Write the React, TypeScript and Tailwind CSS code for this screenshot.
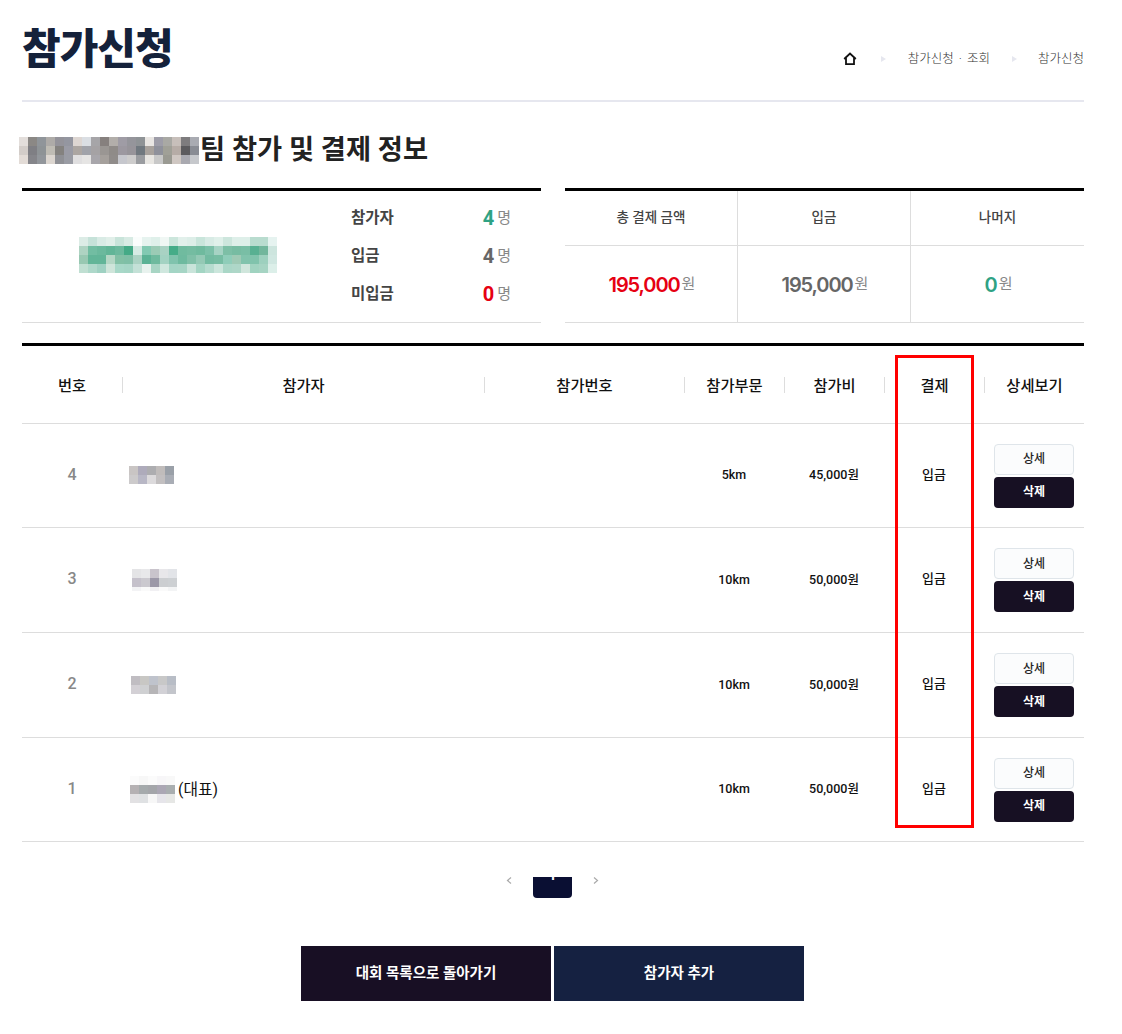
const headingMosaic = [
  ["e3dedb","8b8885","90959a","aeaba8","94939a","9496a0","ddd6d2","dadee3","a6a5a8","86807e","b2aeaa","9f9ca5","95959b","8f9396","e9e6e3","9e9da8","a9a9a4","c7bfba","7e7c7e","a9abb2"],
  ["d3cdc9","7f7f84","8e9396","bfbcb4","84827f","9a9ba5","aca6a2","a1a3aa","a5a2a4","9a9693","8f8b88","9c98a0","97949a","70787f","a8a29d","8f919b","a0a097","b6aca6","5c5b5e","898c94"],
  ["e3dcd7","85858a","92969b","dcd6d0","8f9095","9a9ca4","e0dfe0","e6e5e4","a8a6ab","a5a09c","908c8a","c6c7cd","cdcccc","9a9ca0","e8e6e2","c8c8c8","9a9a92","cfc7c2","a9a9b0","c6c8cc"],
]

const teamMosaic = [
  ["dcece6","c6e2d9","d9ebe5","e1efe9","c9e4da","d8ebe4","fafdfc","e6f3ef","dff0ea","f0f7f4","cce6dc","e2f0eb","ddeee8","c9e5db","d8ebe5","e0f0ea","cde6dd","deefe9","deefe9","b9dccf","b9dccf","e6f3f0"],
  ["aed3c2","72bda2","6bb99d","62b597","6cb99d","44aa86","d6ebe4","82c9b2","9bcbb5","a9d2c3","45ac88","70bb9f","74bca1","6fba9e","7bc0a8","a6d3c4","7dbfa6","77bca2","79bea5","58b092","72b69c","cde5de"],
  ["98c8b2","62b598","62b598","b5d7c5","82c0a5","7fbfa6","acd3c4","5bb295","6fba9e","a3d2c2","80c3ad","6eba9f","80c0a8","94c9b5","72bba1","76bda3","8fcdb9","9fcab5","81c3ac","80c3ac","9dd0be","d0e7e1"],
  ["c0dfd2","aed8ca","9fd1c2","cfe5da","a8d8c8","a6d6c6","c4e1d7","e8f2ee","a8d5c4","cfe7de","a4d5c5","a6d5c5","c9e4da","a3d5c3","b6dccf","cbe6dc","aad7c7","aed7c8","d0e6dc","a0d3c0","a6d4c3","dcefe9"],
]

const nameMosaics = [
  [["c9c5c4","aeabbb","adadb0","c0bcbb","9aa0a8"],["cccacb","b8b7c5","dcdadc","c2bfc0","a9adb5"]],
  [["e4e4e6","e8e8ea","c9c4cc","e8e7ea","e2e4e8"],["c5c1cb","cbc9cf","9c98a8","ccced1","cdd0d3"],["f3f3f5","fafafa","f1f0f3","fafafa","f3f4f5"]],
  [["c0bdc2","c8c7c4","bfc3cc","c8c8c8","b8bdc6"],["d3d0d5","cfd0d2","b6b5b7","d2d1d6","c3c5cb"]],
  [["fbfbfb","f7f7f7","fbfbfb","f7f6f8","f8f8f8"],["b5b1b3","a5aaac","a4a6aa","aba7b4","a9aeb0"],["e2e1e3","dfe1e3","f7f7f7","e6e5ea","e6e7e5"]],
]

const columns = ["번호", "참가자", "참가번호", "참가부문", "참가비", "결제", "상세보기"]

const rows = [
  { no: 4, mosaic: 0, height: "h-[104px]", shift: "ml-[7px] mb-[1px]", part: "5km", fee: "45,000원" },
  { no: 3, mosaic: 1, height: "h-[105px]", shift: "ml-[10px] h-[22px] overflow-hidden", part: "10km", fee: "50,000원" },
  { no: 2, mosaic: 2, height: "h-[105px]", shift: "ml-[9px] mb-[1px]", part: "10km", fee: "50,000원" },
  { no: 1, mosaic: 3, height: "h-[104px]", shift: "ml-[8px]", part: "10km", fee: "50,000원", leader: true },
]

function Mosaic({ cells }: { cells: string[][] }) {
  return (
    <div className="flex flex-col shrink-0">
      {cells.map((line, y) => (
        <div key={y} className="flex">
          {line.map((c, x) => (
            <div key={x} className="w-[9px] h-[9px]" style={{ backgroundColor: `#${c}` }} />
          ))}
        </div>
      ))}
    </div>
  )
}

function Count({ label, value, color }: { label: string; value: number; color: string }) {
  return (
    <div className="flex items-center justify-between h-[38px]">
      <span className="pt-[2px] text-[15.5px] font-bold text-[#444]">{label}</span>
      <span className="flex items-center gap-[3px]">
        <span className={`text-[20px] font-bold ${color}`}>{value}</span>
        <span className="text-[15px] text-[#888]">명</span>
      </span>
    </div>
  )
}

function Amount({ value, color }: { value: string; color: string }) {
  return (
    <div className="flex items-center justify-center gap-[2px] h-[77px] pl-[2px] font-['Inter','Noto_Sans_CJK_KR',sans-serif]">
      <span className={`text-[20px] font-semibold tracking-[-1.1px] ${color}`}>{value}</span>
      <span className="text-[15px] text-[#888]">원</span>
    </div>
  )
}

export default function App() {
  return (
    <main className="relative w-[1122px] h-[1034px] bg-white overflow-hidden font-['Roboto','Noto_Sans_CJK_KR',sans-serif] text-black">
      <div className="ml-[22px] w-[1062px]">
        {/* page title + breadcrumb */}
        <div className="flex items-start justify-between h-[102px] border-b-2 border-[#e6e7ef]">
          <h1 className="mt-[21px] text-[42px] leading-[58px] font-black tracking-[-1px] text-[#14213a]">참가신청</h1>
          <div className="flex items-center mt-[50px] text-[12.5px] leading-[18px] font-light text-[#333]">
            <svg width="14" height="14" viewBox="0 0 14 14" fill="none" stroke="#111" strokeWidth="1.8">
              <path d="M1.2 7 7 1.6 12.8 7M3 6v6.2h8V6" />
            </svg>
            <svg className="ml-[24px] mr-[22px]" width="5" height="6" viewBox="0 0 5 6" fill="#e6e7ef">
              <path d="M0 0 5 3 0 6z" />
            </svg>
            <span className="whitespace-pre [word-spacing:2px]">참가신청 · 조회</span>
            <svg className="ml-[22px] mr-[21px]" width="5" height="6" viewBox="0 0 5 6" fill="#e6e7ef">
              <path d="M0 0 5 3 0 6z" />
            </svg>
            <span>참가신청</span>
          </div>
        </div>

        {/* team heading */}
        <div className="flex items-center -ml-[3px] mt-[30px] h-[36px]">
          <Mosaic cells={headingMosaic} />
          <h2 className="ml-[1px] text-[27.3px] leading-[36px] font-bold text-[#222]">팀 참가 및 결제 정보</h2>
        </div>

        {/* summary */}
        <div className="flex justify-between mt-[20px]">
          <div className="flex w-[519px] h-[135px] border-t-[3px] border-black border-b border-b-[#ddd]">
            <div className="flex items-center w-[329px] pl-[57px] pb-[4px]">
              <Mosaic cells={teamMosaic} />
            </div>
            <div className="w-[160px] pt-[8px]">
              <Count label="참가자" value={4} color="text-[#2fa284]" />
              <Count label="입금" value={4} color="text-[#666]" />
              <Count label="미입금" value={0} color="text-[#e60012]" />
            </div>
          </div>
          <div className="grid grid-cols-3 w-[519px] h-[135px] border-t-[3px] border-black border-b border-b-[#ddd]">
            {[
              ["총 결제 금액", "195,000", "text-[#e60012]"],
              ["입금", "195,000", "text-[#666]"],
              ["나머지", "0", "text-[#2fa284]"],
            ].map(([label, value, color], i) => (
              <div key={label} className={i < 2 ? "border-r border-[#ddd]" : ""}>
                <div className="flex items-center justify-center h-[55px] pb-[2px] border-b border-[#ddd] text-[13.5px] font-medium text-[#444]">
                  {label}
                </div>
                <Amount value={value} color={color} />
              </div>
            ))}
          </div>
        </div>

        {/* participants */}
        <div className="mt-[20px] border-t-[3px] border-black">
          <div className="grid grid-cols-[100px_362px_200px_100px_100px_100px_100px] h-[78px] border-b border-[#ddd] items-center">
            {columns.map((c, i) => (
              <div
                key={c}
                className={`flex items-center justify-center h-[16px] pt-[3px] text-[15.3px] font-medium text-[#111] ${i > 0 ? "border-l border-[#ddd]" : ""}`}
              >
                {c}
              </div>
            ))}
          </div>
          {rows.map((r) => (
            <div
              key={r.no}
              className={`grid grid-cols-[100px_362px_200px_100px_100px_100px_100px] ${r.height} border-b border-[#ddd] items-center text-[#111]`}
            >
              <div className="mb-[2px] text-center text-[16px] font-medium text-[#888]">{r.no}</div>
              <div className="flex items-center">
                <div className={r.shift}>
                  <Mosaic cells={nameMosaics[r.mosaic]} />
                </div>
                {r.leader && <span className="ml-[3px] text-[15.8px] text-[#111]">(대표)</span>}
              </div>
              <div />
              <div className="text-center text-[12.5px] font-medium">{r.part}</div>
              <div className="text-center text-[12.5px] font-medium">{r.fee}</div>
              <div className="mb-[2px] text-center text-[13px] font-medium">입금</div>
              <div className="flex flex-col items-center gap-[2px]">
                <button className="w-[80px] h-[31px] rounded-[4px] border border-[#dfe5ea] bg-[#fbfcfd] text-[12px] font-medium text-[#222]">
                  상세
                </button>
                <button className="w-[80px] h-[31px] rounded-[4px] bg-[#171023] text-[12px] font-bold text-white">
                  삭제
                </button>
              </div>
            </div>
          ))}
        </div>

        {/* pagination, cut off at the top */}
        <div className="flex items-start justify-center gap-[20px] mt-[35px] h-[21px] pr-[1px]">
          <svg width="6" height="7" viewBox="0 0 6 7" fill="none" stroke="#aaa" strokeWidth="1.2">
            <path d="M5 0.5 1.5 3.5 5 6.5" />
          </svg>
          <div className="mx-[1px] w-[39px] h-[21px] overflow-hidden rounded-b-[4px] bg-[#0a0f33] text-center text-white text-[14px] font-bold">
            <div className="-mt-[12px] leading-[20px]">1</div>
          </div>
          <svg width="6" height="7" viewBox="0 0 6 7" fill="none" stroke="#aaa" strokeWidth="1.2">
            <path d="M1 0.5 4.5 3.5 1 6.5" />
          </svg>
        </div>

        {/* actions */}
        <div className="flex justify-center gap-[3px] mt-[48px] pr-[1px]">
          <button className="w-[250px] h-[55px] pt-[1px] bg-[#180f24] text-[14.5px] font-bold text-white">대회 목록으로 돌아가기</button>
          <button className="w-[250px] h-[55px] pt-[1px] bg-[#152141] text-[14.5px] font-bold text-white">참가자 추가</button>
        </div>
      </div>

      {/* red highlight drawn over the screenshot */}
      <div className="absolute left-[895px] top-[355px] w-[79px] h-[473px] border-[3px] border-[#ff0000]" />
    </main>
  )
}
